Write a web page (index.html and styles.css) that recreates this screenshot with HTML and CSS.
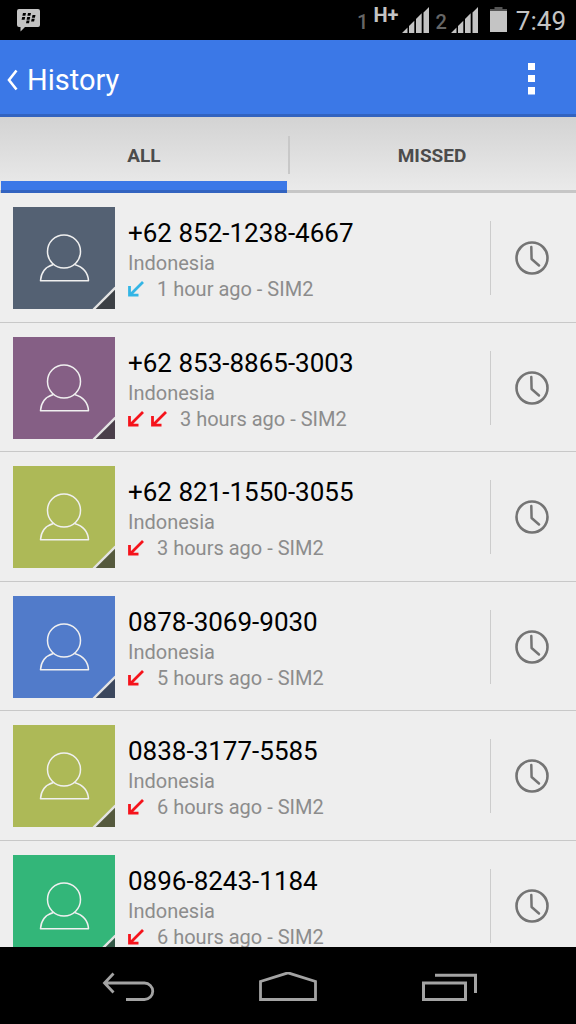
FILE: index.html
```html
<!DOCTYPE html>
<html lang="en">
<head>
<meta charset="utf-8">
<meta name="viewport" content="width=device-width, initial-scale=1">
<title>History</title>
<link rel="stylesheet" href="styles.css">
</head>
<body>
<svg class="defs" aria-hidden="true">
  <symbol id="person" viewBox="0 0 102 102">
    <g fill="none" stroke="#f0f0f0" stroke-width="1.500">
      <circle cx="51" cy="44.500" r="16.500"/>
      <path d="M40.500 57.500C32 60 28 66 27.500 73.700H75.500C75 66 70 60 61.500 57.500" stroke-linejoin="round"/>
    </g>
    <path d="M102 81V102H81z" fill="#333" fill-opacity=".72"/>
    <path d="M102.500 80.500L80.500 102.500" stroke="#e4e4e4" stroke-width="2.400"/>
  </symbol>
  <symbol id="arrow" viewBox="0 0 16 16">
    <path d="M15 1L2.500 13.500M1.500 5V14.200H10.500" fill="none" stroke="currentColor" stroke-width="2.800"/>
  </symbol>
  <symbol id="clock" viewBox="0 0 34 34">
    <circle cx="17" cy="17" r="15.500" fill="none" stroke="#747474" stroke-width="2.600"/>
    <path d="M16.300 6L16.600 18L24 24.500" fill="none" stroke="#747474" stroke-width="2.500" stroke-linecap="round" stroke-linejoin="round"/>
  </symbol>
  <symbol id="signal" viewBox="0 0 28 26">
    <path d="M0 26L5.500 20.500V26zM7 26V19L12.300 13.700V26zM14 26V12L19.700 6.300V26zM21.500 26V5.500L27 0V26z" fill="#c4c4c4"/>
  </symbol>
</svg>
<div class="screen">
  <div class="status">
    <svg class="bbm" viewBox="0 0 23 23" role="img" aria-label="BBM message">
      <path d="M2 0H21Q23 0 23 2V16Q23 18 21 18H8L3.500 22.500V18H2Q0 18 0 16V2Q0 0 2 0z" fill="#c4c4c4"/>
      <path d="M6 4h3l-.6 2.800h-3zM11 4h3l-.6 2.800h-3zM5.200 8h3l-.6 2.800h-3zM10.200 8h3l-.6 2.800h-3zM15.500 6h3l-.6 2.800h-3zM14.700 9.800h3l-.6 2.800h-3zM9.600 11.500h3l-.6 2.800h-3z" fill="#000"/>
    </svg>
    <div class="indicators">
      <span class="sim">1</span>
      <span class="network">H+</span>
      <svg class="signal"><use href="#signal"/></svg>
      <span class="sim sim-two">2</span>
      <svg class="signal"><use href="#signal"/></svg>
      <svg class="battery" viewBox="0 0 17 26"><path d="M4.500 0H12.500V2H17V5H0V2H4.500z" fill="#555"/><path d="M0 4H17V25H0z" fill="#c4c4c4"/></svg>
      <time class="time">7:49</time>
    </div>
  </div>
  <header class="bar">
    <button class="back" type="button">
      <svg class="chevron" viewBox="0 0 11 22"><path d="M9.500 1.500L2 11L9.500 20.500" fill="none" stroke="#fff" stroke-width="2.600"/></svg>
      <span class="title">History</span>
    </button>
    <button class="more" type="button" aria-label="More options">
      <svg class="dots" viewBox="0 0 8 32"><path d="M0 0h7v7H0zM0 12h7v7H0zM0 24h7v7.500H0z" fill="#fff"/></svg>
    </button>
  </header>
  <nav class="tabs">
    <button class="tab active" type="button">ALL</button>
    <button class="tab" type="button">MISSED</button>
  </nav>
  <ul class="calls">
    <li class="call">
      <svg class="avatar slate"><use href="#person"/></svg>
      <div class="info">
        <div class="number">+62 852-1238-4667</div>
        <div class="detail">Indonesia</div>
        <div class="detail meta"><svg class="arrow incoming"><use href="#arrow"/></svg><span class="when">1 hour ago - SIM2</span></div>
      </div>
      <button class="history" type="button" aria-label="Call history"><svg class="clock"><use href="#clock"/></svg></button>
    </li>
    <li class="call">
      <svg class="avatar plum"><use href="#person"/></svg>
      <div class="info">
        <div class="number">+62 853-8865-3003</div>
        <div class="detail">Indonesia</div>
        <div class="detail meta"><svg class="arrow"><use href="#arrow"/></svg><svg class="arrow"><use href="#arrow"/></svg><span class="when">3 hours ago - SIM2</span></div>
      </div>
      <button class="history" type="button" aria-label="Call history"><svg class="clock"><use href="#clock"/></svg></button>
    </li>
    <li class="call">
      <svg class="avatar olive"><use href="#person"/></svg>
      <div class="info">
        <div class="number">+62 821-1550-3055</div>
        <div class="detail">Indonesia</div>
        <div class="detail meta"><svg class="arrow"><use href="#arrow"/></svg><span class="when">3 hours ago - SIM2</span></div>
      </div>
      <button class="history" type="button" aria-label="Call history"><svg class="clock"><use href="#clock"/></svg></button>
    </li>
    <li class="call">
      <svg class="avatar blue"><use href="#person"/></svg>
      <div class="info">
        <div class="number">0878-3069-9030</div>
        <div class="detail">Indonesia</div>
        <div class="detail meta"><svg class="arrow"><use href="#arrow"/></svg><span class="when">5 hours ago - SIM2</span></div>
      </div>
      <button class="history" type="button" aria-label="Call history"><svg class="clock"><use href="#clock"/></svg></button>
    </li>
    <li class="call">
      <svg class="avatar olive"><use href="#person"/></svg>
      <div class="info">
        <div class="number">0838-3177-5585</div>
        <div class="detail">Indonesia</div>
        <div class="detail meta"><svg class="arrow"><use href="#arrow"/></svg><span class="when">6 hours ago - SIM2</span></div>
      </div>
      <button class="history" type="button" aria-label="Call history"><svg class="clock"><use href="#clock"/></svg></button>
    </li>
    <li class="call">
      <svg class="avatar green"><use href="#person"/></svg>
      <div class="info">
        <div class="number">0896-8243-1184</div>
        <div class="detail">Indonesia</div>
        <div class="detail meta"><svg class="arrow"><use href="#arrow"/></svg><span class="when">6 hours ago - SIM2</span></div>
      </div>
      <button class="history" type="button" aria-label="Call history"><svg class="clock"><use href="#clock"/></svg></button>
    </li>
  </ul>
  <div class="keys">
    <button class="key" type="button" aria-label="Back"><svg class="key-icon" viewBox="0 0 60 32"><path d="M16.500 1.500L7.500 11L16.500 20.500M7 11H47.500A8 8 0 0 1 47.500 27.500H29" fill="none" stroke="#a3a3a3" stroke-width="2.800"/></svg></button>
    <button class="key" type="button" aria-label="Home"><svg class="key-icon" viewBox="0 0 60 32"><path d="M2.500 27.500V9.500L30 .8L57.500 9.500V27.500z" fill="none" stroke="#a3a3a3" stroke-width="2.800"/></svg></button>
    <button class="key" type="button" aria-label="Recent apps"><svg class="key-icon" viewBox="0 0 60 32"><path d="M4.500 11H46.500V27.500H4.500zM16 3.300H56.500V21" fill="none" stroke="#a3a3a3" stroke-width="3"/></svg></button>
  </div>
</div>
</body>
</html>
```

FILE: styles.css
```css
*,
*::before,
*::after {
  box-sizing: border-box;
}

body {
  margin: 0;
  background: #000;
  font-family: Roboto, "Noto Sans", sans-serif;
}

button {
  margin: 0;
  padding: 0;
  border: 0;
  background: none;
  color: inherit;
  font: inherit;
}

svg {
  display: block;
  flex: none;
}

.defs {
  position: absolute;
  width: 0;
  height: 0;
}

.screen {
  display: flex;
  flex-direction: column;
  height: 100vh;
}

.status {
  display: flex;
  justify-content: space-between;
  height: 40px;
  padding: 0 10px 0 17px;
  background: #000;
  color: #c4c4c4;
}

.bbm {
  width: 23px;
  height: 23px;
  margin-top: 9px;
}

.indicators {
  display: flex;
  align-items: center;
  line-height: 40px;
}

.sim {
  margin-top: 4px;
  color: #666;
  font-size: 20px;
  font-weight: 500;
}

.sim-two {
  margin: 4px 4px 0 5px;
}

.network {
  margin: -10px 4px 0 5px;
  font-size: 20px;
  font-weight: 700;
}

.signal {
  width: 28px;
  height: 26px;
}

.battery {
  width: 17px;
  height: 26px;
  margin: 0 9px 0 11px;
}

.time {
  margin-top: 2px;
  font-size: 26px;
}

.bar {
  display: flex;
  justify-content: space-between;
  height: 77px;
  border-bottom: 3px solid #3263c0;
  background: #3b78e7;
  color: #fff;
}

.back {
  display: flex;
  align-items: center;
  gap: 9px;
  padding: 5px 8px 0 7px;
}

.chevron {
  width: 11px;
  height: 22px;
}

.title {
  font-size: 29px;
}

.more {
  display: grid;
  place-items: center;
  width: 89px;
  padding-top: 4px;
}

.dots {
  width: 8px;
  height: 32px;
}

.tabs {
  display: flex;
  height: 76px;
  background: linear-gradient(#d3d3d3, #ebebeb);
}

.tab {
  position: relative;
  flex: 1;
  padding-top: 4px;
  border-bottom: 3px solid #c6c6c6;
  color: #4c4c4c;
  font-size: 19px;
  font-weight: 700;
}

.tab + .tab::before {
  content: "";
  position: absolute;
  top: 19px;
  left: 0;
  width: 2px;
  height: 38px;
  background: #c8c8c8;
}

.active::after {
  content: "";
  position: absolute;
  right: 1px;
  bottom: -3px;
  left: 1px;
  height: 12px;
  border-bottom: 3px solid #3263c0;
  background: #3b78e7;
}

.calls {
  flex: 1;
  min-height: 0;
  margin: 0;
  padding: 0;
  overflow: hidden;
  background: #eee;
  list-style: none;
}

.call {
  display: flex;
  align-items: flex-start;
  height: 130px;
  padding: 14px 0 0 13px;
  border-bottom: 1px solid #c8c8c8;
}

.call:nth-child(even) {
  height: 129px;
}

.avatar {
  width: 102px;
  height: 102px;
}

.slate { background: #546173; }
.plum { background: #855f85; }
.olive { background: #adb957; }
.blue { background: #517bca; }
.green { background: #33b679; }

.info {
  flex: 1;
  min-width: 0;
  padding: 9px 0 0 13px;
  white-space: nowrap;
}

.number {
  color: #000;
  font-size: 26px;
  line-height: 34px;
}

.detail {
  color: #8c8c8c;
  font-size: 20px;
  line-height: 26px;
}

.meta {
  display: flex;
  align-items: center;
  gap: 7px;
}

.when {
  margin-left: 6px;
}

.arrow {
  width: 16px;
  height: 16px;
  color: #f5131b;
}

.incoming {
  color: #33b5e5;
}

.history {
  display: grid;
  place-items: center;
  width: 86px;
  height: 74px;
  margin-top: 14px;
  padding-right: 3px;
  border-left: 1px solid #ccc;
}

.clock {
  width: 34px;
  height: 34px;
}

.keys {
  display: flex;
  justify-content: center;
  height: 77px;
  background: #000;
}

.key {
  display: grid;
  place-items: center;
  width: 28%;
  padding-top: 4px;
}

.key-icon {
  width: 60px;
  height: 32px;
}
```
